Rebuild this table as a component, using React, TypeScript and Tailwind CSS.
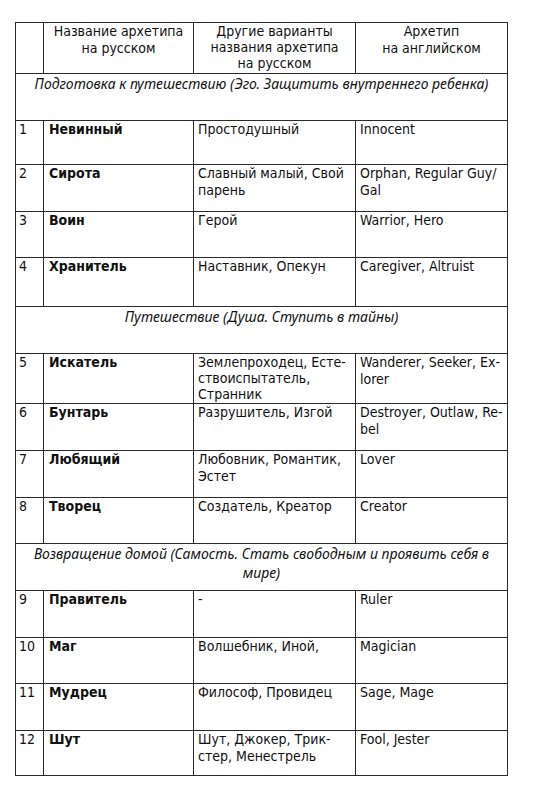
import React from 'react';

type Row = { n: string; name: string; alt: string[]; en: string[]; h: string; tight?: boolean };
type Item = { section: string[]; h: string } | Row;

const items: Item[] = [
  { section: ['Подготовка к путешествию (Эго. Защитить внутреннего ребенка)'], h: 'h-[47px]' },
  { n: '1', name: 'Невинный', alt: ['Простодушный'], en: ['Innocent'], h: 'h-[44px]' },
  { n: '2', name: 'Сирота', alt: ['Славный малый, Свой', 'парень'], en: ['Orphan, Regular Guy/', 'Gal'], h: 'h-[47px]' },
  { n: '3', name: 'Воин', alt: ['Герой'], en: ['Warrior, Hero'], h: 'h-[46px]' },
  { n: '4', name: 'Хранитель', alt: ['Наставник, Опекун'], en: ['Caregiver, Altruist'], h: 'h-[49px]' },
  { section: ['Путешествие (Душа. Ступить в тайны)'], h: 'h-[47px]' },
  { n: '5', name: 'Искатель', alt: ['Землепроходец, Есте-', 'ствоиспытатель,', 'Странник'], en: ['Wanderer, Seeker, Ex-', 'lorer'], h: 'h-[50px]', tight: true },
  { n: '6', name: 'Бунтарь', alt: ['Разрушитель, Изгой'], en: ['Destroyer, Outlaw, Re-', 'bel'], h: 'h-[47px]' },
  { n: '7', name: 'Любящий', alt: ['Любовник, Романтик,', 'Эстет'], en: ['Lover'], h: 'h-[47px]' },
  { n: '8', name: 'Творец', alt: ['Создатель, Креатор'], en: ['Creator'], h: 'h-[46px]' },
  { section: ['Возвращение домой (Самость. Стать свободным и проявить себя в', 'мире)'], h: 'h-[47px]' },
  { n: '9', name: 'Правитель', alt: ['-'], en: ['Ruler'], h: 'h-[47px]' },
  { n: '10', name: 'Маг', alt: ['Волшебник, Иной,'], en: ['Magician'], h: 'h-[46px]' },
  { n: '11', name: 'Мудрец', alt: ['Философ, Провидец'], en: ['Sage, Mage'], h: 'h-[47px]' },
  { n: '12', name: 'Шут', alt: ['Шут, Джокер, Трик-', 'стер, Менестрель'], en: ['Fool, Jester'], h: 'h-[45px]' },
];

function Lines({ lines }: { lines: string[] }) {
  return (
    <>
      {lines.map((l, i) => (
        <div key={i} className="whitespace-nowrap">{l}</div>
      ))}
    </>
  );
}

const cell = 'border border-[#2a2a2a] align-top px-[4px] pt-0 pb-0';

export default function App() {
  return (
    <div className="min-h-[800px] w-[550px] bg-white pt-[22px] pl-[15px] text-[#111] font-['DejaVu_Sans_Condensed','DejaVu_Sans',sans-serif] text-[14px] leading-[17px]">
      <table className="table-fixed border-collapse w-[492px]">
        <colgroup>
          <col className="w-[28px]" />
          <col className="w-[150px]" />
          <col className="w-[162px]" />
          <col className="w-[152px]" />
        </colgroup>
        <thead>
          <tr className="h-[51px]">
            <th className={cell + ' font-normal'}></th>
            <th className={cell + ' font-normal text-center'}>
              <Lines lines={['Название архетипа', 'на русском']} />
            </th>
            <th className={cell + ' font-normal text-center leading-[16px]'}>
              <Lines lines={['Другие варианты', 'названия архетипа', 'на русском']} />
            </th>
            <th className={cell + ' font-normal text-center'}>
              <Lines lines={['Архетип', 'на английском']} />
            </th>
          </tr>
        </thead>
        <tbody>
          {items.map((it, i) =>
            'section' in it ? (
              <tr key={i} className={it.h}>
                <td colSpan={4} className={cell + " text-center italic font-['Noto_Sans',sans-serif] text-[14px] leading-[19px]"}>
                  <Lines lines={it.section} />
                </td>
              </tr>
            ) : (
              <tr key={i} className={it.h}>
                <td className={cell + ' pl-[3px]'}>{it.n}</td>
                <td className={cell + ' font-bold pl-[5px]'}>{it.name}</td>
                <td className={cell + (it.tight ? ' leading-[16px]' : '')}>
                  <Lines lines={it.alt} />
                </td>
                <td className={cell}>
                  <Lines lines={it.en} />
                </td>
              </tr>
            )
          )}
        </tbody>
      </table>
    </div>
  );
}
